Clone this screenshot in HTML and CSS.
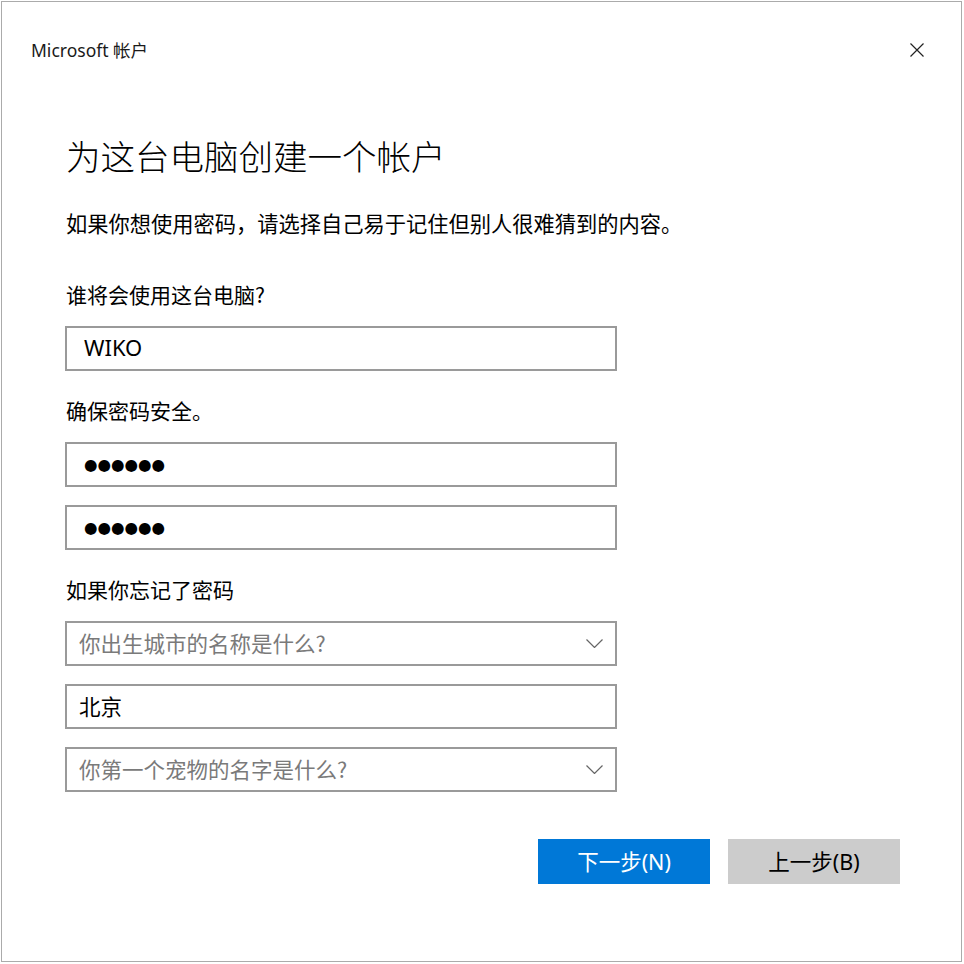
FILE: index.html
```html
<!DOCTYPE html>
<html lang="zh-CN">
<head>
    <meta charset="UTF-8">
    <meta name="viewport" content="width=device-width, initial-scale=1.0">
    <title>Microsoft 帐户</title>
    <link rel="stylesheet" href="styles.css">
</head>
<body>

    <div class="window">
        <header class="titlebar">
            <span class="title">Microsoft 帐户</span>
            <button class="close" aria-label="关闭">
                <svg width="14" height="14" viewBox="0 0 14 14">
                    <path d="M0.5 0.5 L13.5 13.5 M13.5 0.5 L0.5 13.5" stroke="#222" stroke-width="1.2" fill="none"/>
                </svg>
            </button>
        </header>

        <main class="content">
            <h1>为这台电脑创建一个帐户</h1>
            <p class="intro">如果你想使用密码，请选择自己易于记住但别人很难猜到的内容。</p>

            <div class="label">谁将会使用这台电脑?</div>
            <div class="field name">WIKO</div>

            <div class="label">确保密码安全。</div>
            <div class="field dots">●●●●●●</div>
            <div class="field dots">●●●●●●</div>

            <div class="label">如果你忘记了密码</div>
            <div class="field small select">
                <span class="placeholder">你出生城市的名称是什么?</span>
                <svg class="chevron" width="17" height="9" viewBox="0 0 17 9">
                    <path d="M0.5 0.5 L8.5 8.5 L16.5 0.5" stroke="#666" stroke-width="1.2" fill="none"/>
                </svg>
            </div>
            <div class="field small">北京</div>
            <div class="field small select">
                <span class="placeholder">你第一个宠物的名字是什么?</span>
                <svg class="chevron" width="17" height="9" viewBox="0 0 17 9">
                    <path d="M0.5 0.5 L8.5 8.5 L16.5 0.5" stroke="#666" stroke-width="1.2" fill="none"/>
                </svg>
            </div>

            <div class="buttons">
                <button class="btn primary">下一步(N)</button>
                <button class="btn">上一步(B)</button>
            </div>
        </main>
    </div>

</body>
</html>
```

FILE: styles.css
```css
body {
    margin: 0;
    background: #fff;
    font-family: "Noto Sans", "Noto Sans CJK SC", sans-serif;
    color: #000;
}
.window {
    box-sizing: border-box;
    width: 961px;
    height: 961px;
    margin: 1px 0 0 1px;
    border: 1px solid #ababab;
    background: #fff;
}
.titlebar {
    display: flex;
    justify-content: space-between;
    align-items: center;
    height: 96px;
    padding: 0 37px 0 29px;
}
.title {
    font-size: 17.5px;
    color: #1a1a1a;
    padding-bottom: 2px;
}
.close {
    border: none;
    background: none;
    padding: 0;
    width: 14px;
    height: 14px;
    display: flex;
}
.content {
    padding: 0 61px 0 63px;
}
h1 {
    font-family: "Noto Sans CJK SC", sans-serif;
    font-weight: 300;
    font-size: 34.5px;
    line-height: 44px;
    margin: 35px 0 0 1px;
}
.intro {
    font-family: "Noto Sans CJK SC", sans-serif;
    font-size: 21.25px;
    line-height: 28px;
    margin: 32px 0 0 1px;
}
.label {
    font-family: "Noto Sans CJK SC", sans-serif;
    font-size: 21px;
    line-height: 28px;
    margin: 25px 0 0 1px;
}
.intro + .label {
    margin-top: 43px;
}
.field {
    box-sizing: border-box;
    display: flex;
    align-items: center;
    width: 552px;
    height: 45px;
    margin-top: 18px;
    padding: 0 0 3px 17px;
    border: 2px solid #9a9a9a;
    font-size: 21px;
}
.field + .field {
    margin-top: 18px;
}
.name {
    font-size: 22px;
}
.field.small {
    padding-left: 12px;
    font-family: "Noto Sans CJK SC", sans-serif;
    font-size: 21.5px;
}
.dots {
    font-family: "DejaVu Sans", sans-serif;
    font-size: 15.5px;
    padding-bottom: 0;
}
.select {
    justify-content: space-between;
    padding-right: 12px;
}
.placeholder {
    color: #7a7a7a;
}
.chevron {
    display: block;
    margin-top: 3px;
}
.buttons {
    display: flex;
    justify-content: flex-end;
    gap: 18px;
    margin-top: 47px;
}
.btn {
    width: 172px;
    height: 45px;
    border: none;
    background: #cccccc;
    color: #000;
    font-family: "Noto Sans", "Noto Sans CJK SC", sans-serif;
    font-size: 21.5px;
    padding: 0 0 2px;
}
.btn.primary {
    background: #0078d7;
    color: #fff;
}
```
